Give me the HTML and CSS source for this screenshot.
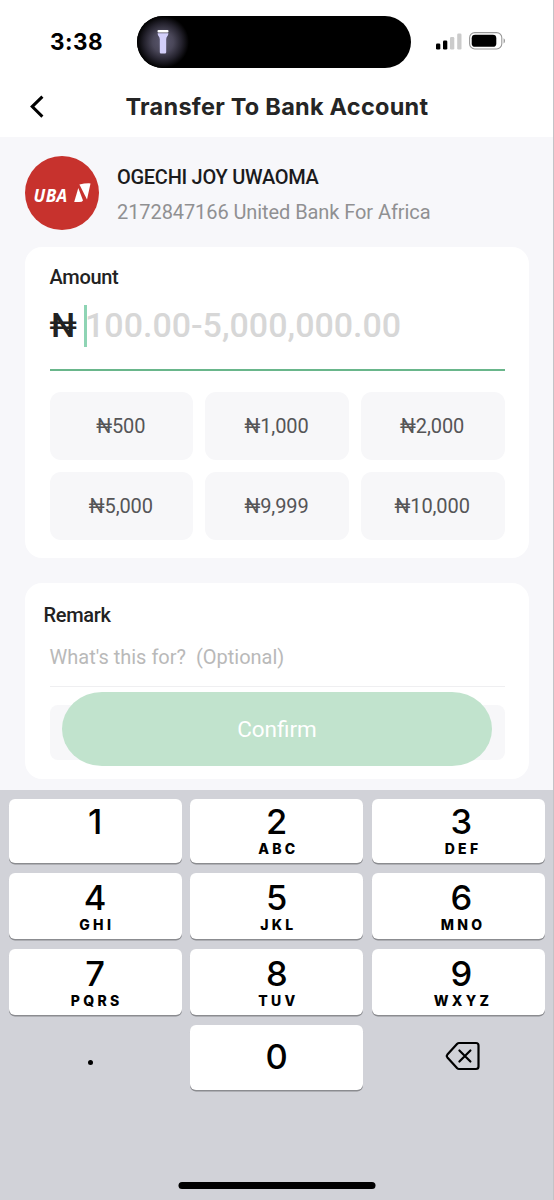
FILE: index.html
```html
<!DOCTYPE html>
<html lang="en">
<head>
<meta charset="utf-8">
<title>Transfer To Bank Account</title>
<link rel="stylesheet" href="styles.css">
</head>
<body>
<div class="screen">
  <div class="status">
    <span class="time">3:38</span>
    <div class="island">
      <div class="torch-glow">
        <svg width="12" height="24" viewBox="0 0 12 24"><rect x="0.5" y="0" width="11" height="2.4" rx="1" fill="#fff"/><path d="M0.6 3.2h10.8c0 2.6-2.2 3.4-2.2 6v13a1.2 1.2 0 0 1-1.2 1.2H4a1.2 1.2 0 0 1-1.2-1.2V9.2c0-2.6-2.2-3.4-2.2-6z" fill="#d3cffa"/></svg>
      </div>
    </div>
    <svg class="signal" width="26" height="18" viewBox="0 0 26 18"><rect x="0" y="10.5" width="4.3" height="6" rx="1.3"/><rect x="7" y="7.5" width="4.3" height="9" rx="1.3"/><rect x="14" y="4" width="4.3" height="12.5" rx="1.3" fill="#cbcbcb"/><rect x="21.2" y="0.5" width="4.3" height="16" rx="1.3" fill="#cbcbcb"/></svg>
    <svg class="battery" width="38" height="18" viewBox="0 0 38 18"><rect x="0.6" y="0.6" width="32.2" height="16.4" rx="5.2" fill="none" stroke="#989898" stroke-width="1.1"/><rect x="2.7" y="2.8" width="24.6" height="12" rx="3.4"/><path d="M34.6 6.2c1.7.8 1.7 4.4 0 5.2z" fill="#8e8e8e"/></svg>
  </div>
  <header class="header">
    <svg class="back" width="16" height="24" viewBox="0 0 16 24"><path d="M14.4 1.6L4.2 11.6l10.2 10" fill="none" stroke="#000" stroke-width="3"/></svg>
    <h1 class="title">Transfer To Bank Account</h1>
  </header>
  <main class="content">
    <section class="payee">
      <div class="avatar">
        <span class="avatar-text">UBA</span>
        <svg width="17" height="20" viewBox="0 0 17 20" fill="#fff"><path d="M4.3 5L9 17.4Q8.4 18.9 5 18.9H0.2Z"/><path d="M5.4 1.4Q11 .2 16.5.4L13 16.4Z"/></svg>
      </div>
      <div class="payee-info">
        <div class="payee-name">OGECHI JOY UWAOMA</div>
        <div class="payee-bank">2172847166 United Bank For Africa</div>
      </div>
    </section>
    <section class="card amount-card">
      <div class="label">Amount</div>
      <div class="amount-row">
        <span class="naira">₦</span><span class="caret"></span><span class="placeholder">100.00-5,000,000.00</span>
      </div>
      <div class="chips">
        <div class="chip">₦500</div><div class="chip">₦1,000</div><div class="chip">₦2,000</div>
        <div class="chip">₦5,000</div><div class="chip">₦9,999</div><div class="chip">₦10,000</div>
      </div>
    </section>
    <section class="card remark-card">
      <div class="label remark-label">Remark</div>
      <div class="remark-input">What's this for?&nbsp; (Optional)</div>
      <div class="remark-tags"></div>
      <div class="confirm">Confirm</div>
    </section>
  </main>
  <div class="keyboard">
    <div class="keys">
      <div class="key top"><b>1</b></div><div class="key top"><b>2</b><i>ABC</i></div><div class="key top right"><b>3</b><i>DEF</i></div>
      <div class="key"><b>4</b><i>GHI</i></div><div class="key"><b>5</b><i>JKL</i></div><div class="key right"><b>6</b><i>MNO</i></div>
      <div class="key"><b>7</b><i>PQRS</i></div><div class="key"><b>8</b><i>TUV</i></div><div class="key right"><b>9</b><i>WXYZ</i></div>
      <div class="plain"><span class="dot"></span></div>
      <div class="key zero"><b>0</b></div>
      <div class="plain delete-key"><svg width="36" height="30" viewBox="0 0 36 30" fill="none" stroke="#000" stroke-width="2.2" stroke-linecap="round" stroke-linejoin="round"><path d="M14 2h17a2.5 2.5 0 0 1 2.5 2.5v21A2.5 2.5 0 0 1 31 28H14q-1 0-1.8-.8L2.4 16.4q-1.2-1.4 0-2.8L12.2 2.8Q13 2 14 2z"/><path d="M14.4 9.5l11 11M25.4 9.5l-11 11"/></svg></div>
    </div>
    <div class="home"></div>
  </div>
</div>
</body>
</html>
```
FILE: styles.css
```css
* { box-sizing: border-box; }
body { margin: 0; background: #f7f7fa; font-family: Roboto, "Liberation Sans", sans-serif; }
.screen { width: 554px; height: 1200px; display: flex; flex-direction: column; overflow: hidden; position: relative; }
.screen::after { content: ""; position: absolute; top: 0; right: 0; width: 1px; height: 1200px; background: #c3c3c7; }

.status { height: 80px; background: #fff; display: flex; align-items: flex-start; padding-left: 50px; flex: none; }
.time { width: 87px; margin-top: 28px; font: 700 22.5px/28px Inter, sans-serif; letter-spacing: 0.5px; color: #000; white-space: nowrap; }
.island { width: 274px; height: 52px; margin-top: 16px; border-radius: 26px; background: #000; overflow: hidden; }
.torch-glow { width: 52px; height: 52px; display: flex; align-items: center; justify-content: center; background: radial-gradient(circle closest-side, #5c5970 0, #4a4759 40%, #24222d 72%, #000 100%); }
.signal { margin: 33px 0 0 25px; }
.battery { margin: 32px 0 0 7px; }

.header { height: 57px; background: #fff; flex: none; display: flex; padding-left: 28px; }
.back { margin-top: 15px; }
.title { margin: 12px 0 0 81.5px; font: 700 23.5px/29px Inter, sans-serif; letter-spacing: 0.25px; color: #252525; white-space: nowrap; }

.content { height: 653px; flex: none; padding: 19px 25px 0; }
.payee { display: flex; height: 91px; }
.avatar { width: 74px; height: 74px; border-radius: 50%; background: #c7322d; display: flex; padding: 27px 0 0 8.5px; color: #fff; }
.avatar-text { width: 40px; margin-top: -1px; font: italic 700 17px/27px "Open Sans", sans-serif; letter-spacing: 0.4px; white-space: nowrap; }
.payee-info { margin-left: 18px; white-space: nowrap; }
.payee-name { margin-top: 9px; font-size: 20px; line-height: 24px; font-weight: 500; letter-spacing: -0.28px; color: #1b1b1d; }
.payee-bank { margin-top: 11px; font-size: 20px; line-height: 24px; letter-spacing: -0.08px; color: #909092; }

.card { background: #fff; border-radius: 17px; position: relative; }
.amount-card { height: 311px; padding: 18px 24.5px 0; }
.label { font-size: 20px; line-height: 24px; font-weight: 500; letter-spacing: -0.3px; color: #222; }
.amount-row { height: 81.5px; display: flex; border-bottom: 2px solid #69b68b; white-space: nowrap; }
.naira { width: 34px; margin-top: 16px; font-size: 34px; line-height: 40px; font-weight: 500; color: #222; }
.caret { width: 3px; height: 42px; margin-top: 16px; background: #8ed4b4; }
.placeholder { margin: 16px 0 0 -1.5px; font-size: 34px; line-height: 40px; font-weight: 500; color: #d7d7d7; }
.chips { margin-top: 21.5px; display: grid; grid-template-columns: repeat(3, 1fr); grid-auto-rows: 68px; gap: 12px; }
.chip { border-radius: 11px; background: #f7f7f9; display: flex; align-items: center; justify-content: center; padding-right: 1px; font-size: 20px; letter-spacing: -0.1px; color: #555557; }

.remark-card { height: 196px; margin-top: 25px; padding: 20px 24.5px 0; }
.remark-label { margin-left: -6px; }
.remark-input { height: 60px; padding-top: 18px; font-size: 20px; line-height: 24px; color: #b9b9b9; border-bottom: 1px solid #efeff1; white-space: pre; }
.remark-tags { height: 55px; margin-top: 18px; border-radius: 8px; background: #f7f7f9; }
.confirm { position: absolute; left: 37px; top: 109px; width: 430px; height: 74px; padding-bottom: 1px; border-radius: 40px / 37px; background: #c1e3cd; color: #fff; display: flex; align-items: center; justify-content: center; font-size: 22.5px; }

.keyboard { height: 410px; flex: none; background: #d1d2d8; padding: 9px 9px 0 8.5px; }
.keys { display: grid; grid-template-columns: repeat(3, 1fr); grid-template-rows: 64px 66px 66px 65px; row-gap: 10px; column-gap: 8.5px; }
.key { border-radius: 6px; background: #fff; box-shadow: 0 1.5px 0 #8b8c90; text-align: center; font-family: Inter, sans-serif; color: #000; }
.key b { display: block; margin-top: 4.5px; font-size: 34.5px; line-height: 39px; font-weight: 500; }
.key i { display: block; font: 800 14px/16px Inter, sans-serif; letter-spacing: 3.3px; padding-left: 3.3px; }
.top b { margin-top: 3px; }
.right { padding-left: 6px; }
.zero b { margin-top: 12px; }
.plain { display: flex; }
.dot { width: 5px; height: 5px; border-radius: 50%; background: #000; margin: 35px 0 0 79px; }
.delete-key svg { margin: 16px 0 0 73px; }
.home { width: 197px; height: 7px; margin: 92px auto 0; border-radius: 4px; background: #000; transform: translateX(0.5px); }
```
